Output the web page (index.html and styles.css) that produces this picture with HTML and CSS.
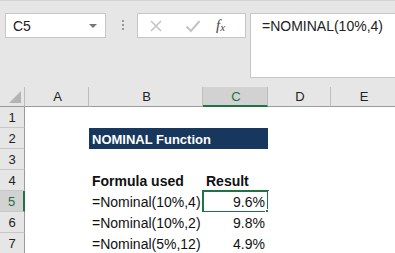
FILE: index.html
```html
<!DOCTYPE html>
<html>
<head>
  <title>NOMINAL Function</title>
  <meta charset="utf-8">
  <link rel="stylesheet" href="styles.css">
</head>
<body>

  <!-- Formula bar -->
  <div class="formula-bar">
    <div class="name-box">
      <span>C5</span>
      <span class="caret"></span>
    </div>
    <div class="grip"><i></i><i></i><i></i></div>
    <div class="bar-buttons">
      <svg width="14" height="14" viewBox="0 0 14 14">
        <path d="M2 2 L12 12 M12 2 L2 12" stroke="#c4c4c4" stroke-width="1.6" fill="none"/>
      </svg>
      <svg width="16" height="14" viewBox="0 0 16 14">
        <path d="M1.5 7.5 L6 12 L14.5 2" stroke="#c4c4c4" stroke-width="2" fill="none"/>
      </svg>
      <span class="fx">f<sub>x</sub></span>
    </div>
    <div class="formula-input">=NOMINAL(10%,4)</div>
  </div>

  <!-- Sheet -->
  <div class="sheet">
    <div class="hdr corner"><span class="tri"></span></div>
    <div class="hdr col">A</div>
    <div class="hdr col">B</div>
    <div class="hdr col active">C</div>
    <div class="hdr col">D</div>
    <div class="hdr col last">E</div>

    <div class="hdr row">1</div>
    <div class="cell"></div><div class="cell"></div><div class="cell"></div><div class="cell"></div><div class="cell"></div>

    <div class="hdr row">2</div>
    <div class="cell"></div>
    <div class="cell title">NOMINAL Function</div>
    <div class="cell"></div><div class="cell"></div>

    <div class="hdr row">3</div>
    <div class="cell"></div><div class="cell"></div><div class="cell"></div><div class="cell"></div><div class="cell"></div>

    <div class="hdr row">4</div>
    <div class="cell"></div>
    <div class="cell bold">Formula used</div>
    <div class="cell bold">Result</div>
    <div class="cell"></div><div class="cell"></div>

    <div class="hdr row active">5</div>
    <div class="cell"></div>
    <div class="cell">=Nominal(10%,4)</div>
    <div class="cell num selected">9.6%<span class="handle"></span></div>
    <div class="cell"></div><div class="cell"></div>

    <div class="hdr row">6</div>
    <div class="cell"></div>
    <div class="cell">=Nominal(10%,2)</div>
    <div class="cell num">9.8%</div>
    <div class="cell"></div><div class="cell"></div>

    <div class="hdr row">7</div>
    <div class="cell"></div>
    <div class="cell">=Nominal(5%,12)</div>
    <div class="cell num">4.9%</div>
    <div class="cell"></div><div class="cell"></div>
  </div>

</body>
</html>
```

FILE: styles.css
```css
/* General Page Styling */
body {
  margin: 0;
  font-family: "Liberation Sans", Arial, sans-serif;
  background-color: #fff;
  overflow: hidden;
}

/* Formula Bar */
.formula-bar {
  display: flex;
  align-items: flex-start;
  height: 87px;
  padding-top: 12px;
  box-sizing: border-box;
  background-color: #e6e6e6;
  border-top: 1px solid #d4d4d4;
}

.name-box {
  display: flex;
  align-items: center;
  justify-content: space-between;
  width: 101px;
  height: 25px;
  margin-left: 5px;
  padding: 0 8px 0 7px;
  box-sizing: border-box;
  background-color: #fff;
  border: 1px solid #c6c6c6;
  font-size: 14px;
  color: #222;
}

.caret {
  width: 0;
  height: 0;
  border-left: 4px solid transparent;
  border-right: 4px solid transparent;
  border-top: 4px solid #777;
}

.grip {
  display: flex;
  flex-direction: column;
  gap: 2px;
  width: 31px;
  align-items: center;
  padding-top: 7px;
  padding-left: 2px;
  box-sizing: border-box;
}

.grip i {
  width: 2px;
  height: 2px;
  background-color: #9a9a9a;
}

.bar-buttons {
  display: flex;
  align-items: center;
  width: 109px;
  height: 25px;
  padding-left: 11px;
  box-sizing: border-box;
  background-color: #fff;
  border: 1px solid #c6c6c6;
  gap: 22px;
}

.fx {
  font-family: "Liberation Serif", serif;
  font-style: italic;
  font-size: 15px;
  color: #444;
  margin-left: -7px;
}

.fx sub {
  font-size: 11px;
  vertical-align: -1px;
}

.formula-input {
  flex: 1;
  height: 65px;
  margin-left: 4px;
  padding: 4px 0 0 11px;
  box-sizing: border-box;
  background-color: #fff;
  border: 1px solid #c6c6c6;
  border-right: none;
  font-size: 14px;
  color: #222;
}

/* Sheet Grid */
.sheet {
  display: grid;
  grid-template-columns: 25px 64px 114px 65px 63px 1fr;
  grid-template-rows: 20px repeat(7, 21px);
  background-color: #e6e6e6;
}

.hdr {
  display: flex;
  align-items: center;
  justify-content: center;
  font-size: 13px;
  color: #222;
  background-color: #e6e6e6;
  box-sizing: border-box;
}

.hdr.col {
  padding-left: 2px;
  border-bottom: 1px solid #9b9b9b;
  border-right: 1px solid #bdbdbd;
}

.hdr.col.last {
  border-right: none;
}

.hdr.corner {
  position: relative;
  border-bottom: 1px solid #9b9b9b;
  border-right: 1px solid #bdbdbd;
}

.tri {
  position: absolute;
  right: 3px;
  bottom: 3px;
  width: 0;
  height: 0;
  border-left: 12px solid transparent;
  border-bottom: 12px solid #b4b4b4;
}

.hdr.row {
  border-right: 1px solid #9b9b9b;
  border-bottom: 1px solid #c8c8c8;
}

.hdr.active {
  background-color: #d2d2d2;
  color: #217346;
}

.hdr.col.active {
  border-bottom: 2px solid #217346;
}

.hdr.row.active {
  border-right: 2px solid #217346;
}

.cell {
  position: relative;
  display: flex;
  align-items: center;
  padding: 0 3px;
  background-color: #fff;
  font-size: 14px;
  color: #111;
  white-space: nowrap;
}

.cell.title {
  grid-column: span 2;
  margin-bottom: -1px;
  background-color: #17375e;
  color: #fff;
  font-weight: bold;
  font-size: 13px;
}

.cell.bold {
  font-weight: bold;
}

.cell.num {
  justify-content: flex-end;
}

.cell.selected {
  outline: 2px solid #217346;
  outline-offset: -1px;
}

.handle {
  position: absolute;
  right: -4px;
  bottom: -4px;
  width: 5px;
  height: 5px;
  background-color: #217346;
  border: 1px solid #fff;
}
```
